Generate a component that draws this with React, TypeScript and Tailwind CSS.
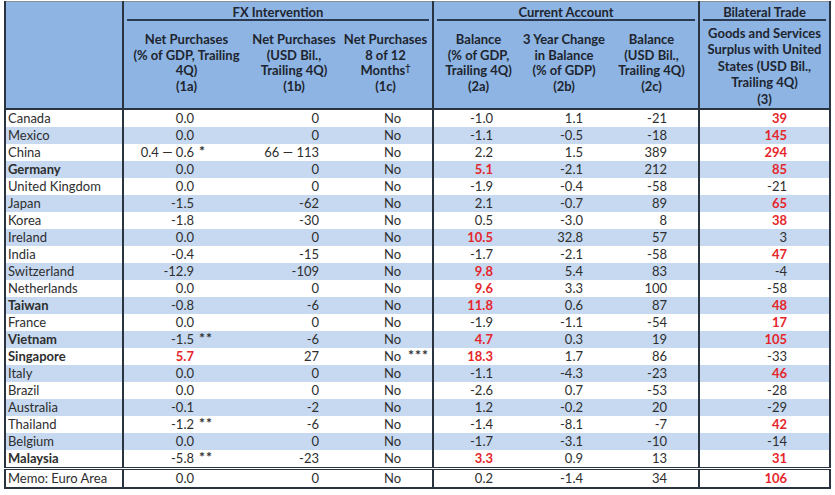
import React from "react";

type Row = {
  name: string;
  bold?: boolean;
  a: string;
  aMark?: string;
  aRed?: boolean;
  b: string;
  cMark?: string;
  d: string;
  dRed?: boolean;
  e: string;
  f: string;
  g: string;
  gRed?: boolean;
};

const rows: Row[] = [
  { name: "Canada", a: "0.0", b: "0", d: "-1.0", e: "1.1", f: "-21", g: "39", gRed: true },
  { name: "Mexico", a: "0.0", b: "0", d: "-1.1", e: "-0.5", f: "-18", g: "145", gRed: true },
  { name: "China", a: "0.4 \u2014 0.6", aMark: "*", b: "66 \u2014 113", d: "2.2", e: "1.5", f: "389", g: "294", gRed: true },
  { name: "Germany", bold: true, a: "0.0", b: "0", d: "5.1", dRed: true, e: "-2.1", f: "212", g: "85", gRed: true },
  { name: "United Kingdom", a: "0.0", b: "0", d: "-1.9", e: "-0.4", f: "-58", g: "-21" },
  { name: "Japan", a: "-1.5", b: "-62", d: "2.1", e: "-0.7", f: "89", g: "65", gRed: true },
  { name: "Korea", a: "-1.8", b: "-30", d: "0.5", e: "-3.0", f: "8", g: "38", gRed: true },
  { name: "Ireland", a: "0.0", b: "0", d: "10.5", dRed: true, e: "32.8", f: "57", g: "3" },
  { name: "India", a: "-0.4", b: "-15", d: "-1.7", e: "-2.1", f: "-58", g: "47", gRed: true },
  { name: "Switzerland", a: "-12.9", b: "-109", d: "9.8", dRed: true, e: "5.4", f: "83", g: "-4" },
  { name: "Netherlands", a: "0.0", b: "0", d: "9.6", dRed: true, e: "3.3", f: "100", g: "-58" },
  { name: "Taiwan", bold: true, a: "-0.8", b: "-6", d: "11.8", dRed: true, e: "0.6", f: "87", g: "48", gRed: true },
  { name: "France", a: "0.0", b: "0", d: "-1.9", e: "-1.1", f: "-54", g: "17", gRed: true },
  { name: "Vietnam", bold: true, a: "-1.5", aMark: "**", b: "-6", d: "4.7", dRed: true, e: "0.3", f: "19", g: "105", gRed: true },
  { name: "Singapore", bold: true, a: "5.7", aRed: true, b: "27", cMark: "***", d: "18.3", dRed: true, e: "1.7", f: "86", g: "-33" },
  { name: "Italy", a: "0.0", b: "0", d: "-1.1", e: "-4.3", f: "-23", g: "46", gRed: true },
  { name: "Brazil", a: "0.0", b: "0", d: "-2.6", e: "0.7", f: "-53", g: "-28" },
  { name: "Australia", a: "-0.1", b: "-2", d: "1.2", e: "-0.2", f: "20", g: "-29" },
  { name: "Thailand", a: "-1.2", aMark: "**", b: "-6", d: "-1.4", e: "-8.1", f: "-7", g: "42", gRed: true },
  { name: "Belgium", a: "0.0", b: "0", d: "-1.7", e: "-3.1", f: "-10", g: "-14" },
  { name: "Malaysia", bold: true, a: "-5.8", aMark: "**", b: "-23", d: "3.3", dRed: true, e: "0.9", f: "13", g: "31", gRed: true },
];

const memo: Row = { name: "Memo: Euro Area", a: "0.0", b: "0", d: "0.2", e: "-1.4", f: "34", g: "106", gRed: true };

const red = "text-[#e5262b] font-bold";

function DataRow({ r, stripe, memoRow }: { r: Row; stripe: boolean; memoRow?: boolean }) {
  const bg = stripe ? "bg-[#c6d9f1]" : "bg-white";
  const top = memoRow ? "border-t-[3px] border-double border-[#2a3440]" : "";
  return (
    <tr className={`${bg} h-[17px] leading-[17px]`}>
      <td className={`${top} h-[17px] border-l-2 border-l-[#2a3440] border-r-2 border-r-[#2a3440] pl-[2px] whitespace-nowrap ${r.bold ? "font-bold" : ""}`}>
        {r.name}
      </td>
      <td className={`${top} whitespace-nowrap`}>
        <span className={`inline-block w-[70px] text-right ${r.aRed ? red : ""}`}>{r.a}</span>
        {r.aMark && <span className="ml-[5px] text-[14px] leading-[0] font-bold tracking-[1px] relative top-[-1px]">{r.aMark}</span>}
      </td>
      <td className={`${top} text-right pr-[20px] whitespace-nowrap`}>{r.b}</td>
      <td className={`${top} border-r-2 border-r-[#2a3440] pl-[45px] whitespace-nowrap`}>
        No{r.cMark && <span className="ml-[7px] text-[14px] leading-[0] font-bold tracking-[1px] relative top-[-1px]">{r.cMark}</span>}
      </td>
      <td className={`${top} text-right pr-[30px] ${r.dRed ? red : ""}`}>{r.d}</td>
      <td className={`${top} text-right pr-[22px]`}>{r.e}</td>
      <td className={`${top} border-r-2 border-r-[#2a3440] text-right pr-[31px]`}>{r.f}</td>
      <td className={`${top} border-r-2 border-r-[#2a3440] text-right pr-[42px] ${r.gRed ? red : ""}`}>{r.g}</td>
    </tr>
  );
}

function Group({ label }: { label: string }) {
  return <div className="mx-[3px] border-b-2 border-[#2a3a52] h-[18px] leading-[18px]">{label}</div>;
}

export default function App() {
  const cols = [118, 126, 90, 94, 90, 82, 94, 131];
  return (
    <div className="w-[835px] h-[495px] bg-white overflow-hidden pt-[1px] pl-[4px]" style={{ fontFamily: "Lato, 'Open Sans', sans-serif" }}>
      <table className="table-fixed border-collapse text-[13px] text-[#2e2e2e]">
        <colgroup>
          {cols.map((w, i) => (
            <col key={i} style={{ width: w }} />
          ))}
        </colgroup>
        <thead className="bg-[#8db4e2] text-[#1e2530] font-bold text-[13px]">
          <tr className="border-t-[1px] border-t-[#8a8f96]">
            <th rowSpan={2} className="border-l-2 border-l-[#2a3440] border-r-2 border-r-[#2a3440] border-b-2 border-b-[#2a3440] p-0"></th>
            <th colSpan={3} className="border-r-2 border-r-[#2a3440] p-0 pt-[1px] font-bold">
              <Group label="FX Intervention" />
            </th>
            <th colSpan={3} className="border-r-2 border-r-[#2a3440] p-0 pt-[1px] font-bold">
              <Group label="Current Account" />
            </th>
            <th className="border-r-2 border-r-[#2a3440] p-0 pt-[1px] font-bold">
              <Group label="Bilateral Trade" />
            </th>
          </tr>
          <tr className="h-[88px] border-b-2 border-b-[#2a3440] leading-[15.5px] align-middle">
            <th className="p-0 pb-[3px] font-bold">
              Net Purchases
              <br />
              (% of GDP, Trailing
              <br />
              4Q)
              <br />
              (1a)
            </th>
            <th className="p-0 pb-[3px] font-bold">
              Net Purchases
              <br />
              (USD Bil.,
              <br />
              Trailing 4Q)
              <br />
              (1b)
            </th>
            <th className="p-0 pb-[3px] border-r-2 border-r-[#2a3440] font-bold">
              Net Purchases
              <br />
              8 of 12
              <br />
              Months<sup className="text-[9px]">†</sup>
              <br />
              (1c)
            </th>
            <th className="p-0 pb-[3px] font-bold">
              Balance
              <br />
              (% of GDP,
              <br />
              Trailing 4Q)
              <br />
              (2a)
            </th>
            <th className="p-0 pb-[3px] font-bold">
              3 Year Change
              <br />
              in Balance
              <br />
              (% of GDP)
              <br />
              (2b)
            </th>
            <th className="p-0 pb-[3px] border-r-2 border-r-[#2a3440] font-bold">
              Balance
              <br />
              (USD Bil.,
              <br />
              Trailing 4Q)
              <br />
              (2c)
            </th>
            <th className="p-0 pt-[3px] border-r-2 border-r-[#2a3440] font-bold leading-[16.5px]">
              Goods and Services
              <br />
              Surplus with United
              <br />
              States (USD Bil.,
              <br />
              Trailing 4Q)
              <br />
              (3)
            </th>
          </tr>
        </thead>
        <tbody>
          {rows.map((r, i) => (
            <DataRow key={r.name} r={r} stripe={i % 2 === 1} />
          ))}
          <DataRow r={memo} stripe={false} memoRow />
          <tr>
            <td colSpan={8} className="border-t-2 border-t-[#2a3440] h-0 p-0"></td>
          </tr>
        </tbody>
      </table>
    </div>
  );
}
